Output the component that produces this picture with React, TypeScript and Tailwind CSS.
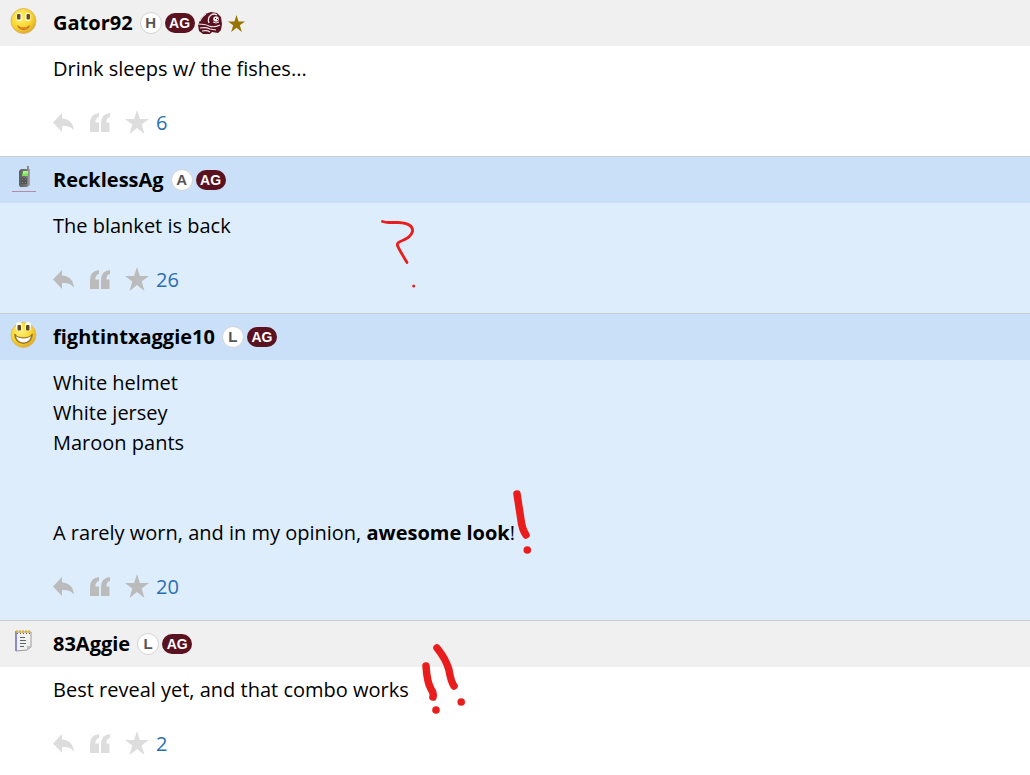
import React from 'react';
import { clsx } from 'clsx';

interface Post {
  id: string;
  author: string;
  letter: string;
  avatar: React.ReactNode;
  stars: number;
  featured?: boolean;
  sponsor?: boolean;
  content: React.ReactNode;
  markup?: React.ReactNode;
}

const Smiley = () => (
  <svg width="28" height="28" viewBox="0 0 28 28" aria-hidden="true">
    <defs>
      <radialGradient id="smiley-face" cx="0.4" cy="0.35" r="0.7">
        <stop offset="0" stopColor="#fff27a" />
        <stop offset="0.6" stopColor="#f8d62c" />
        <stop offset="1" stopColor="#d8a32c" />
      </radialGradient>
    </defs>
    <circle cx="13.500" cy="14" r="12.500" fill="url(#smiley-face)" stroke="#dfba62" strokeWidth="1" />
    <rect x="6.500" y="6" width="5.500" height="8" rx="2" fill="#fffbe8" />
    <rect x="15" y="6" width="5.500" height="8" rx="2" fill="#fffbe8" />
    <rect x="7" y="7" width="3.500" height="5.500" rx="1" fill="#6b4a22" />
    <rect x="16.500" y="7" width="3.500" height="5.500" rx="1" fill="#6b4a22" />
    <path d="M7 18q1 0 2 1.500 4.500 2 9 0 1-1.500 2-1.500-1 4.500-6.500 5-5.500-.5-6.500-5z" fill="#c06a1e" />
    <path d="M10 20.500q3.500 1.500 7 0" fill="none" stroke="#ea8a34" strokeWidth="1.500" />
  </svg>
);

const Grin = () => (
  <svg width="28" height="28" viewBox="0 0 28 28" aria-hidden="true">
    <circle cx="13.500" cy="14" r="12.500" fill="url(#smiley-face)" stroke="#e0bd68" strokeWidth="1" />
    <rect x="6" y="1" width="6" height="9" rx="3" fill="#fffbe8" />
    <rect x="15" y="1" width="6" height="9" rx="3" fill="#fffbe8" />
    <rect x="7.500" y="4" width="3.500" height="5.500" rx="1" fill="#65451e" />
    <rect x="16" y="4" width="3.500" height="5.500" rx="1" fill="#65451e" />
    <path d="M4 12.500q2 0 3 2.500 6.500 2.500 13 0 1-2.500 3-2.500-.5 10-9.500 10.500-9-.5-9.500-10.500z" fill="#9d742b" />
    <path d="M6 15.500q7.500 4 15 0-1.500 5.500-7.500 6-6-.5-7.500-6z" fill="#fff" />
  </svg>
);

const Phone = () => (
  <svg width="24" height="28" viewBox="0 0 24 28" aria-hidden="true">
    <defs>
      <linearGradient id="phone-body">
        <stop offset="0" stopColor="#5d5d5d" />
        <stop offset="0.7" stopColor="#777" />
        <stop offset="1" stopColor="#aaa" />
      </linearGradient>
    </defs>
    <path d="M15 2h2v3h1v16l-3 2H8l-1-2V7l2-2h6z" fill="url(#phone-body)" />
    <path d="M11 7h5v5h-6z" fill="#7de456" />
    <path d="M11 7h5v2l-5 1z" fill="#a8f585" />
    <path d="M9 14h6v6H9z" fill="#555" />
    <path d="M10 15h1v1h-1zm3 0h1v1h-1zm-3 3h1v1h-1zm3 0h1v1h-1z" fill="#8b8b8b" />
    <path d="M0 27.500h24" stroke="#b68aa5" />
  </svg>
);

const Notepad = () => (
  <svg width="24" height="28" viewBox="0 0 24 28" aria-hidden="true">
    <path d="M4 4h15v15l-4 3-11 1z" fill="#f1f1ef" stroke="#9a9aa0" />
    <path d="M4 3v20" stroke="#7777ce" strokeWidth="1.500" />
    <path d="M4 3.500h15" stroke="#dcb73d" strokeWidth="2.500" strokeDasharray="2 1" />
    <path d="M5 5.500h13" stroke="#775d45" strokeDasharray="1 2" />
    <path d="M8 9.500h5M8 12.500h6M8 15.500h6M8 18.500h4" stroke="#5d6670" />
    <path d="M15 22v-4h4z" fill="#bfc0bd" />
  </svg>
);

const SponsorLogo = () => (
  <svg width="24" height="22" viewBox="0 0 24 22" aria-label="Sponsor">
    <path d="M0 13 3 6 7 2l6-2 6 1 4 4 1 7-1 6-3 3-6-1-2 2H5l-4-3z" fill="#5b1220" />
    <path d="M2 9q2-5 6-7M0 12q7 0 11 2 5 2 11-1M2 16q6-1 10 1l6 1M4 19q5-1 8 1" fill="none" stroke="#f2e9ea" strokeWidth="1.100" />
    <path d="M11 11q-2-5 2-8 3-2 6 0" fill="none" stroke="#f2e9ea" strokeWidth="1.300" />
    <circle cx="18" cy="7" r="2.800" fill="#f2e9ea" />
    <path d="M17 6h1v1h-1zM19 7h1v1h-1z" fill="#5b1220" />
    <path d="M15 10q3 2 6 0" fill="none" stroke="#f2e9ea" />
  </svg>
);

const StarShape = ({ size }: { size: number }) => (
  <svg width={size} height={size} viewBox="0 0 24 24" fill="currentColor" aria-hidden="true">
    <path d="M12 0l2.900 9H24l-7.300 5.500L19.500 24 12 18l-7.500 6 2.800-9.500L0 9h9.100z" />
  </svg>
);

const ReplyShape = () => (
  <svg width="22" height="20" viewBox="0 0 22 20" fill="currentColor" aria-hidden="true">
    <path d="M0 9.500 9 0v5.500c7 .5 11 4 12 12-3-4-7-5-12-4.500V19z" />
  </svg>
);

const QuoteShape = () => (
  <svg width="20" height="19" viewBox="0 0 20 19" fill="currentColor" aria-hidden="true">
    <path d="M9 0v4Q5.500 4.500 5.300 9.500H9V19H0V10Q0 1 9 0zM20 0v4q-3.500.5-3.700 5.500h3.200V19H11V10q0-9 9-10z" />
  </svg>
);

const QuestionInk = () => (
  <svg className="pointer-events-none absolute left-[380px] top-4" width="40" height="72" viewBox="380 219 40 72" aria-hidden="true">
    <path d="M382.500 221.500q3 1 6 1h10q15 1 14 9-2 6-10 9-6 2-5 5 1 3 9.500 17" fill="none" stroke="#ea1d1d" strokeWidth="2.800" strokeLinecap="round" strokeLinejoin="round" />
    <circle cx="413.700" cy="286" r="1.500" fill="#ea1d1d" />
  </svg>
);

const ExclamationInk = () => (
  <svg className="pointer-events-none absolute bottom-16 left-[510px]" width="25" height="66" viewBox="510 490 25 66" aria-hidden="true">
    <path d="M517 494l4 26q1 9 5 15" fill="none" stroke="#ea1d1d" strokeWidth="7.500" strokeLinecap="round" strokeLinejoin="round" />
    <circle cx="527.300" cy="550" r="3.800" fill="#ea1d1d" />
  </svg>
);

const DoubleExclamationInk = () => (
  <svg className="pointer-events-none absolute -top-6 left-[420px]" width="48" height="74" viewBox="420 643 48 74" aria-hidden="true">
    <path d="M437 648q9 11 12 22 2 12 5 16M426 666q1 16 5 23 3 4 2 8" fill="none" stroke="#ea1d1d" strokeWidth="7.500" strokeLinecap="round" strokeLinejoin="round" />
    <circle cx="461.200" cy="702" r="3.800" fill="#ea1d1d" />
    <circle cx="436" cy="710" r="3.800" fill="#ea1d1d" />
  </svg>
);

const posts: Post[] = [
  {
    id: 'gator92',
    author: 'Gator92',
    letter: 'H',
    avatar: <Smiley />,
    stars: 6,
    sponsor: true,
    content: 'Drink sleeps w/ the fishes...',
  },
  {
    id: 'recklessag',
    author: 'RecklessAg',
    letter: 'A',
    avatar: <Phone />,
    stars: 26,
    featured: true,
    content: 'The blanket is back',
    markup: <QuestionInk />,
  },
  {
    id: 'fightintxaggie10',
    author: 'fightintxaggie10',
    letter: 'L',
    avatar: <Grin />,
    stars: 20,
    featured: true,
    content: (
      <>
        White helmet<br />
        White jersey<br />
        Maroon pants<br />
        <br />
        <br />
        A rarely worn, and in my opinion, <b>awesome look</b>!
      </>
    ),
    markup: <ExclamationInk />,
  },
  {
    id: '83aggie',
    author: '83Aggie',
    letter: 'L',
    avatar: <Notepad />,
    stars: 2,
    content: 'Best reveal yet, and that combo works',
    markup: <DoubleExclamationInk />,
  },
];

const PostItem = ({ post }: { post: Post }) => (
  <article className="border-t border-[#cccccc] first:border-t-0">
    {/* Author bar */}
    <header className={clsx('flex h-[46px] items-center', post.featured ? 'bg-[#cae0f9]' : 'bg-[#f0f0f0]')}>
      <div className="flex w-[53px] shrink-0 justify-center pr-[6px] pb-1">{post.avatar}</div>
      <a href={`#${post.id}`} className="mr-[7px] font-bold">{post.author}</a>
      <span className="mr-[3px] flex size-[22px] items-center justify-center rounded-full border border-[#d4d4d4] bg-white font-['Liberation_Sans',sans-serif] text-[15px] font-bold text-[#555]">
        {post.letter}
      </span>
      <span className="flex h-5 w-[30px] items-center justify-center rounded-full bg-[#5b1220] font-['Liberation_Sans',sans-serif] text-sm font-bold text-white">
        AG
      </span>
      {post.sponsor && (
        <>
          <span className="ml-[3px]"><SponsorLogo /></span>
          <span className="ml-1.5 text-[#997300]"><StarShape size={17} /></span>
        </>
      )}
    </header>

    {/* Message and actions */}
    <div className={clsx('relative pt-2 pr-4 pb-5 pl-[53px]', post.featured && 'bg-[#deedfc]')}>
      <p className="leading-[30px]">{post.content}</p>
      <div className={clsx('mt-[25px] flex h-[27px] items-center', post.featured ? 'text-[#bbbbbb]' : 'text-[#dddddd]')}>
        <button type="button" aria-label="Reply" className="mr-[15px]"><ReplyShape /></button>
        <button type="button" aria-label="Quote" className="mr-[15px]"><QuoteShape /></button>
        <button type="button" aria-label="Star" className="mr-[7px] pb-0.5"><StarShape size={24} /></button>
        <a href={`#${post.id}-stars`} className="text-[#286eb4]">{post.stars}</a>
      </div>
      {post.markup}
    </div>
  </article>
);

export default function App() {
  return (
    <main className="w-full bg-white font-['Open_Sans','Noto_Sans',sans-serif] text-[20px] leading-[30px] text-black">
      {posts.map((post) => (
        <PostItem key={post.id} post={post} />
      ))}
    </main>
  );
}
